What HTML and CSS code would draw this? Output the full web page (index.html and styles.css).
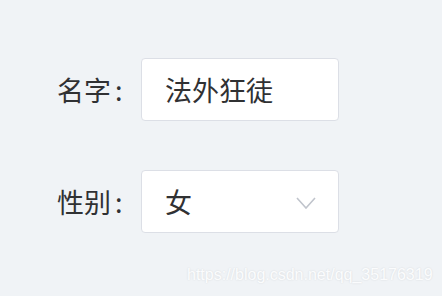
FILE: index.html
```html
<!DOCTYPE html>
<html lang="zh">
<head>
  <meta charset="UTF-8">
  <title>表单</title>
  <link rel="stylesheet" href="styles.css">
</head>
<body>
  <div class="form">
    <div class="form-row">
      <label class="form-label">名字<span class="colon">:</span></label>
      <div class="field">法外狂徒</div>
    </div>

    <div class="form-row">
      <label class="form-label">性别<span class="colon">:</span></label>
      <div class="field select">
        <span>女</span>
        <svg class="arrow" width="20" height="12" viewBox="0 0 20 12">
          <polyline points="1,1 10,11 19,1" fill="none" stroke="#c0c4cc" stroke-width="1.6"/>
        </svg>
      </div>
    </div>
  </div>

  <div class="watermark">https://blog.csdn.net/qq_35176319</div>
</body>
</html>
```

FILE: styles.css
```css
body {
  margin: 0;
  padding: 0;
  width: 442px;
  height: 296px;
  background-color: #f0f3f6;
  font-family: "Noto Sans CJK SC", "Noto Sans", sans-serif;
  color: #303133;
  position: relative;
  overflow: hidden;
}

.form {
  padding: 58px 0 0 57px;
  display: flex;
  flex-direction: column;
  gap: 49px;
}

.form-row {
  display: flex;
  align-items: center;
}

.form-label {
  width: 84px;
  font-size: 27px;
  line-height: 1;
}

.colon {
  margin-left: 4px;
}

.field {
  box-sizing: border-box;
  width: 198px;
  height: 63px;
  padding-left: 23px;
  border: 1px solid #dcdfe6;
  border-radius: 4px;
  background: #fff;
  font-size: 27px;
  display: flex;
  align-items: center;
}

.select {
  justify-content: space-between;
  padding-right: 22px;
}

.arrow {
  display: block;
  margin-top: 2px;
}

.watermark {
  position: absolute;
  left: 187px;
  top: 266px;
  font-family: "Liberation Sans", Arial, sans-serif;
  font-size: 16px;
  color: #fbfcfd;
  text-shadow: 0 0 2px rgba(0, 0, 0, 0.12);
}
```
